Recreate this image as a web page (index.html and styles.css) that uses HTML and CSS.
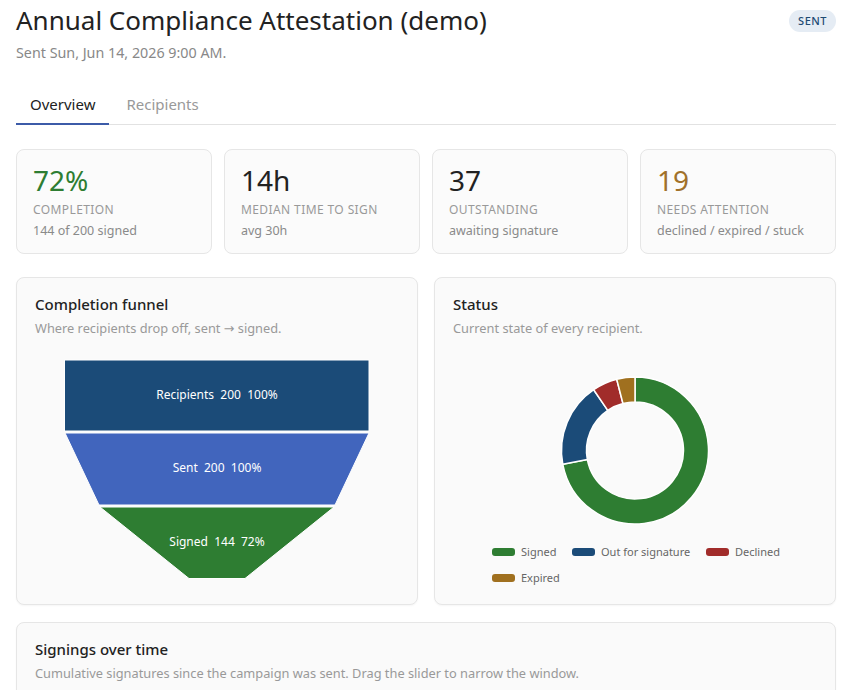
FILE: index.html
```html
<!DOCTYPE html>
<html lang="en">
<head>
<meta charset="utf-8">
<title>Annual Compliance Attestation (demo)</title>
<link rel="stylesheet" href="styles.css">
</head>
<body>
<div class="page">
  <header class="head">
    <h1 class="title">Annual Compliance Attestation (demo)</h1>
    <span class="badge">SENT</span>
  </header>
  <p class="sent">Sent Sun, Jun 14, 2026 9:00 AM.</p>

  <nav class="tabs">
    <span class="tab active">Overview</span>
    <span class="tab">Recipients</span>
  </nav>

  <section class="stats">
    <div class="stat">
      <div class="value green">72%</div>
      <div class="label">COMPLETION</div>
      <div class="sub">144 of 200 signed</div>
    </div>
    <div class="stat">
      <div class="value">14h</div>
      <div class="label">MEDIAN TIME TO SIGN</div>
      <div class="sub">avg 30h</div>
    </div>
    <div class="stat">
      <div class="value">37</div>
      <div class="label">OUTSTANDING</div>
      <div class="sub">awaiting signature</div>
    </div>
    <div class="stat">
      <div class="value gold">19</div>
      <div class="label">NEEDS ATTENTION</div>
      <div class="sub">declined / expired / stuck</div>
    </div>
  </section>

  <section class="panels">
    <div class="panel">
      <div class="panel-head">
        <h2 class="panel-title">Completion funnel</h2>
        <p class="panel-sub">Where recipients drop off, sent → signed.</p>
      </div>
      <svg class="chart" viewBox="0 0 400 267" width="400" height="267">
        <polygon class="f1" points="47.5,23 352,23 352,94 47.5,94"/>
        <polygon class="f2" points="48,96 352,96 318,168 82,168"/>
        <polygon class="f3" points="83,170 317,170 228,241.5 172,241.5"/>
        <text class="flabel" x="200" y="62">Recipients&#160;&#160;200&#160;&#160;100%</text>
        <text class="flabel" x="200" y="135">Sent&#160;&#160;200&#160;&#160;100%</text>
        <text class="flabel" x="200" y="209">Signed&#160;&#160;144&#160;&#160;72%</text>
      </svg>
    </div>
    <div class="panel">
      <div class="panel-head">
        <h2 class="panel-title">Status</h2>
        <p class="panel-sub">Current state of every recipient.</p>
      </div>
      <svg class="chart" viewBox="0 0 400 267" width="400" height="267">
        <path class="seg s-signed" d="M200,40 A73.5,73.5 0 1 1 127.80,127.27 L152.36,122.59 A48.5,48.5 0 1 0 200,65 Z"/>
        <path class="seg s-out" d="M127.80,127.27 A73.5,73.5 0 0 1 158.69,52.71 L172.74,73.39 A48.5,48.5 0 0 0 152.36,122.59 Z"/>
        <path class="seg s-declined" d="M158.69,52.71 A73.5,73.5 0 0 1 181.72,42.31 L187.94,66.52 A48.5,48.5 0 0 0 172.74,73.39 Z"/>
        <path class="seg s-expired" d="M181.72,42.31 A73.5,73.5 0 0 1 200,40 L200,65 A48.5,48.5 0 0 0 187.94,66.52 Z"/>

        <rect class="s-signed" x="57" y="211" width="23" height="8" rx="3"/>
        <text class="ltext" x="86" y="219">Signed</text>
        <rect class="s-out" x="137" y="211" width="23" height="8" rx="3"/>
        <text class="ltext" x="166" y="219">Out for signature</text>
        <rect class="s-declined" x="271" y="211" width="23" height="8" rx="3"/>
        <text class="ltext" x="300" y="219">Declined</text>
        <rect class="s-expired" x="57" y="237" width="23" height="8" rx="3"/>
        <text class="ltext" x="86" y="245">Expired</text>
      </svg>
    </div>
  </section>

  <section class="panel wide">
    <div class="panel-head">
      <h2 class="panel-title">Signings over time</h2>
      <p class="panel-sub">Cumulative signatures since the campaign was sent. Drag the slider to narrow the window.</p>
    </div>
  </section>
</div>
</body>
</html>
```

FILE: styles.css
```css
* { box-sizing: border-box; }
html, body { margin: 0; padding: 0; background: #ffffff; }
body {
  font-family: "Noto Sans", "Open Sans", "DejaVu Sans", sans-serif;
  color: #222;
}
.page {
  width: 852px;
  padding: 5px 16px 0;
}

.head {
  display: flex;
  justify-content: space-between;
  align-items: center;
}
.title {
  margin: 0;
  font-size: 26px;
  font-weight: 400;
  line-height: 31px;
  color: #222;
}
.badge {
  background: #e5ecf4;
  color: #1d4a73;
  font-size: 11px;
  font-weight: 500;
  letter-spacing: 0.5px;
  line-height: 22px;
  height: 22px;
  padding: 0 9px;
  border-radius: 11px;
}
.sent {
  margin: 8px 0 0;
  font-size: 14.3px;
  line-height: 18px;
  color: #888;
}

.tabs {
  display: flex;
  margin-top: 22px;
  border-bottom: 1px solid #e2e2e2;
}
.tab {
  padding: 10px 14px 9px;
  font-size: 15px;
  line-height: 20px;
  color: #999;
  border-bottom: 2px solid transparent;
  margin-bottom: -1px;
  margin-right: 3px;
}
.tab.active {
  color: #222;
  border-bottom-color: #3c5ba8;
}

.stats {
  display: grid;
  grid-template-columns: repeat(4, 1fr);
  gap: 12px;
  margin-top: 24px;
}
.stat {
  background: #fbfbfb;
  border: 1px solid #e6e6e6;
  border-radius: 8px;
  padding: 13px 16px 15px;
  height: 105px;
}
.value {
  font-size: 28px;
  line-height: 34px;
  color: #222;
}
.value.green { color: #2e7d32; }
.value.gold { color: #a1712a; }
.label {
  margin-top: 5px;
  font-size: 12px;
  line-height: 16px;
  letter-spacing: 0.4px;
  color: #999;
}
.sub {
  margin-top: 4px;
  font-size: 12.5px;
  line-height: 18px;
  color: #8a8a8a;
}

.panels {
  display: grid;
  grid-template-columns: 1fr 1fr;
  gap: 16px;
  margin-top: 23px;
}
.panel {
  background: #fafafa;
  border: 1px solid #e6e6e6;
  border-radius: 8px;
  box-shadow: 0 1px 2px rgba(0, 0, 0, 0.04);
}
.panel-head { padding: 16px 18px 0; }
.panel-title {
  margin: 0;
  font-size: 15px;
  font-weight: 500;
  line-height: 20px;
  color: #222;
}
.panel-sub {
  margin: 5px 0 0;
  font-size: 12.8px;
  line-height: 18px;
  color: #999;
}
.chart { display: block; width: 400px; height: 267px; }

.f1 { fill: #1b4b78; stroke: #ffffff; stroke-width: 1; }
.f2 { fill: #4165bd; stroke: #ffffff; stroke-width: 1; }
.f3 { fill: #2e7d32; stroke: #ffffff; stroke-width: 1; }
.flabel {
  fill: #ffffff;
  font-size: 12px;
  text-anchor: middle;
}

.seg { stroke: #ffffff; stroke-width: 1.5; stroke-linejoin: round; }
.s-signed { fill: #2e7d32; }
.s-out { fill: #1b4b78; }
.s-declined { fill: #a12c2a; }
.s-expired { fill: #a0701f; }
.ltext {
  fill: #666;
  font-size: 11px;
}

.wide {
  margin-top: 17px;
  height: 200px;
}
```
